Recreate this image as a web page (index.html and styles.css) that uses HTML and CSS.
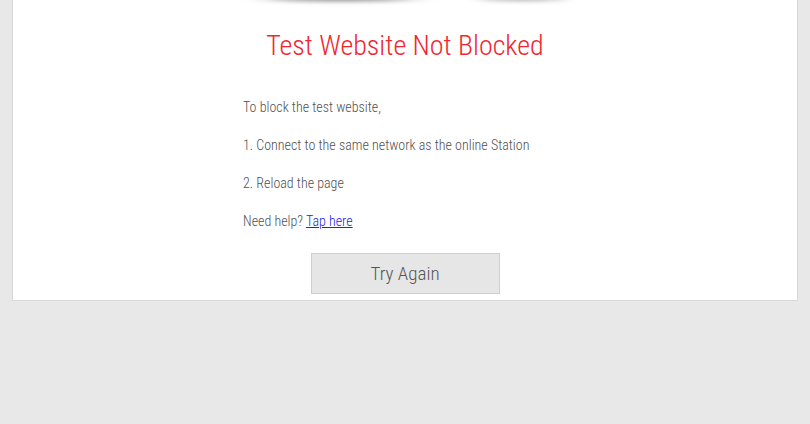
FILE: index.html
```html
<!DOCTYPE html>
<html>
<head>
<meta charset="utf-8">
<link rel="stylesheet" href="styles.css">
</head>
<body>
<div class="card">
  <div class="hero">
    <svg class="shadows" width="360" height="12" viewBox="0 0 360 12">
      <defs>
        <filter id="b1" x="-20%" y="-300%" width="140%" height="700%"><feGaussianBlur stdDeviation="2"/></filter>
        <radialGradient id="g1" cx="0.5" cy="0.5" r="0.5">
          <stop offset="0" stop-color="#707070"/>
          <stop offset="0.6" stop-color="#a8a8a8"/>
          <stop offset="1" stop-color="#ffffff" stop-opacity="0"/>
        </radialGradient>
        <radialGradient id="g2" cx="0.5" cy="0.5" r="0.5">
          <stop offset="0" stop-color="#9a9a9a"/>
          <stop offset="0.6" stop-color="#c4c4c4"/>
          <stop offset="1" stop-color="#ffffff" stop-opacity="0"/>
        </radialGradient>
      </defs>
      <ellipse cx="115" cy="-1" rx="105" ry="3.5" fill="url(#g1)" filter="url(#b1)"/>
      <ellipse cx="297" cy="-1" rx="62" ry="3" fill="url(#g2)" filter="url(#b1)"/>
    </svg>
  </div>
  <h1 class="title">Test Website Not Blocked</h1>
  <div class="steps">
    <p>To block the test website,</p>
    <p>1. Connect to the same network as the online Station</p>
    <p>2. Reload the page</p>
    <p>Need help? <a class="link" href="#">Tap here</a></p>
  </div>
  <div class="actions">
    <button class="btn">Try Again</button>
  </div>
</div>
</body>
</html>
```
FILE: styles.css
```css
html, body {
  margin: 0;
  padding: 0;
}
body {
  background: #e8e8e8;
  padding: 0 12px;
  font-family: "Roboto Condensed", Roboto, "Liberation Sans", sans-serif;
  font-weight: 300;
  height: 424px;
  overflow: hidden;
}
.card {
  background: #ffffff;
  border: 1px solid #d8d8d8;
  border-top: none;
  height: 301px;
  box-sizing: border-box;
  display: flex;
  flex-direction: column;
  align-items: center;
}
.hero {
  height: 12px;
  width: 100%;
  display: flex;
  justify-content: center;
}
.shadows {
  display: block;
}
.title {
  margin: 14px 0 0 0;
  font-weight: 300;
  font-size: 28px;
  line-height: 40px;
  color: #f1262e;
}
.steps {
  width: 324px;
  margin-top: 31px;
  color: #505050;
  font-size: 14px;
}
.steps p {
  margin: 0 0 18px 0;
  line-height: 20px;
  white-space: nowrap;
}
.link {
  color: #2222e6;
  text-decoration: underline;
}
.actions {
  margin-top: 4px;
}
.btn {
  width: 189px;
  height: 41px;
  background: #e6e6e6;
  border: 1px solid #cfcfcf;
  border-radius: 0;
  color: #555555;
  font-family: "Roboto Condensed", Roboto, "Liberation Sans", sans-serif;
  font-size: 19px;
  font-weight: 300;
  padding: 0;
}
```
